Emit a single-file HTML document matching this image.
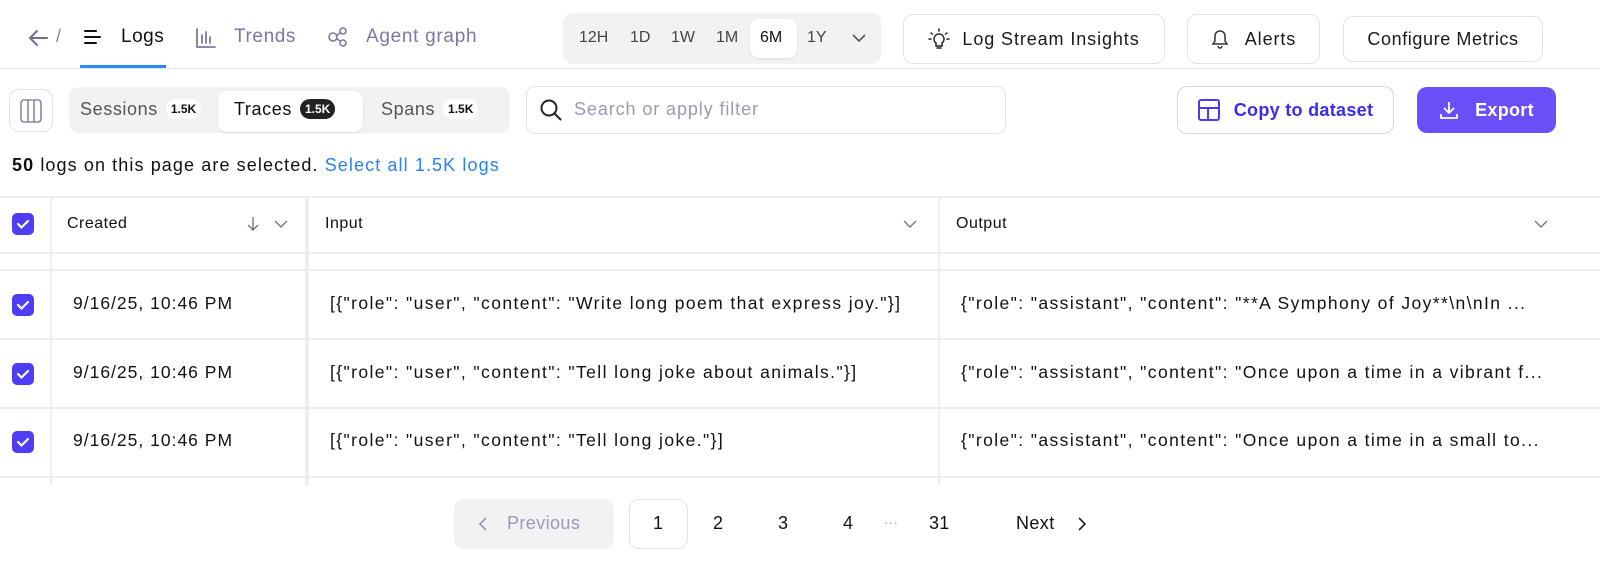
<!DOCTYPE html>
<html><head><style>
*{box-sizing:border-box;margin:0;padding:0}
body{width:1600px;height:570px;background:#fff;font-family:"Liberation Sans",sans-serif;color:#111;position:relative;overflow:hidden}
.a{position:absolute}
.t{font-size:18px;white-space:nowrap;letter-spacing:0.9px}
.btn{position:absolute;border:1px solid #e2e2ea;border-radius:10px;background:#fff;display:flex;align-items:center;justify-content:center;font-size:18px;color:#1a1a1a;letter-spacing:0.9px;white-space:nowrap}
.badge{display:inline-block;font-size:12px;font-weight:bold;background:#fff;border-radius:10px;padding:3px 5px;margin-left:8px;vertical-align:2px;color:#111;letter-spacing:0}
.hl{position:absolute;left:0;width:1600px;height:2px;background:#ececf1}
.vl{position:absolute;width:2px;background:#ececf1}
.cb{position:absolute;left:12px;width:22px;height:22px;border-radius:5px;background:#4f3df5}
.cb svg{position:absolute;left:4px;top:5px}
.cell{position:absolute;font-size:17.5px;color:#111;white-space:nowrap;letter-spacing:1.4px}
.h{position:absolute;font-size:16px;letter-spacing:0.5px}
</style></head><body>
<svg class="a" style="left:27px;top:29px" width="22" height="18" viewBox="0 0 22 18"><path d="M20 9H3M10 2L3 9l7 7" stroke="#6e6e8a" stroke-width="2" fill="none" stroke-linecap="round"/></svg>
<div class="a t" style="left:56px;top:26px;color:#888">/</div>
<svg class="a" style="left:84px;top:29px" width="18" height="16"><path d="M1 2h11M1 8h15M1 14h11" stroke="#111" stroke-width="2" stroke-linecap="round"/></svg>
<div class="a t" style="left:121px;top:26px;font-size:19px;letter-spacing:0.5px">Logs</div>
<div class="a" style="left:80px;top:65px;width:86px;height:3px;background:#2a8af6"></div>
<svg class="a" style="left:195px;top:27px" width="22" height="22"><path d="M2 2v18h18M7 8v8M11 5v11M15 10v6" stroke="#7b78a8" stroke-width="1.8" fill="none" stroke-linecap="round"/></svg>
<div class="a t" style="left:234px;top:26px;font-size:19px;color:#7b78a8;letter-spacing:0.6px">Trends</div>
<svg class="a" style="left:327px;top:26px" width="22" height="22"><circle cx="6" cy="11" r="4" stroke="#7b78a8" stroke-width="1.6" fill="none"/><circle cx="16" cy="5" r="3" stroke="#7b78a8" stroke-width="1.6" fill="none"/><circle cx="16" cy="17" r="3" stroke="#7b78a8" stroke-width="1.6" fill="none"/><path d="M10 9l3-2M10 13l3 2" stroke="#7b78a8" stroke-width="1.6"/></svg>
<div class="a t" style="left:366px;top:26px;font-size:19px;color:#7b78a8;letter-spacing:0.7px">Agent graph</div>
<div class="hl" style="top:68px;height:1px;background:#e4e4ea"></div>
<div class="a" style="left:563px;top:13px;width:318px;height:51px;background:#f2f2f5;border-radius:10px"></div>
<div class="a" style="left:750px;top:19px;width:47px;height:39px;background:#fff;border-radius:9px;box-shadow:0 1px 2px rgba(0,0,0,.1)"></div>
<div class="a" style="left:579px;top:29px;font-size:16px;color:#444">12H</div>
<div class="a" style="left:630px;top:29px;font-size:16px;color:#444">1D</div>
<div class="a" style="left:671px;top:29px;font-size:16px;color:#444">1W</div>
<div class="a" style="left:716px;top:29px;font-size:16px;color:#444">1M</div>
<div class="a" style="left:760px;top:29px;font-size:16px;color:#111">6M</div>
<div class="a" style="left:807px;top:29px;font-size:16px;color:#444">1Y</div>
<svg class="a" style="left:852px;top:33px" width="14" height="10"><path d="M1 2l6 6 6-6" stroke="#555" stroke-width="1.6" fill="none"/></svg>
<div class="btn" style="left:903px;top:14px;width:262px;height:50px"><svg width="22" height="22" style="margin-right:12px"><path d="M11 6a5 5 0 0 0-3 9v3h6v-3a5 5 0 0 0-3-9zM9 20h4M11 1v2M3 5l1.5 1M19 5l-1.5 1M1 11h2M19 11h2" stroke="#222" stroke-width="1.5" fill="none" stroke-linecap="round"/></svg>Log Stream Insights</div>
<div class="btn" style="left:1187px;top:14px;width:133px;height:50px"><svg width="18" height="20" style="margin-right:16px"><path d="M9 2a5 5 0 0 0-5 5v5l-2 3h14l-2-3V7a5 5 0 0 0-5-5zM7 17a2 2 0 0 0 4 0" stroke="#333" stroke-width="1.5" fill="none"/></svg>Alerts</div>
<div class="btn" style="left:1343px;top:16px;width:200px;height:46px;letter-spacing:0.6px">Configure Metrics</div>
<div class="btn" style="left:9px;top:89px;width:44px;height:43px"><svg width="22" height="24"><rect x="1" y="1" width="20" height="22" rx="3" stroke="#8886a8" stroke-width="1.6" fill="none"/><path d="M8 1v22M14 1v22" stroke="#8886a8" stroke-width="1.6"/></svg></div>
<div class="a" style="left:69px;top:87px;width:441px;height:46px;background:#f2f2f5;border-radius:10px"></div>
<div class="a" style="left:218px;top:91px;width:145px;height:41px;background:#fff;border-radius:9px;box-shadow:0 1px 2px rgba(0,0,0,.1)"></div>
<div class="a t" style="left:80px;top:99px;color:#555;letter-spacing:0.6px">Sessions<span class="badge">1.5K</span></div>
<div class="a t" style="left:234px;top:99px;color:#111;letter-spacing:0.6px">Traces<span class="badge" style="background:#222;color:#fff">1.5K</span></div>
<div class="a t" style="left:381px;top:99px;color:#555;letter-spacing:0.6px">Spans<span class="badge">1.5K</span></div>
<div class="a" style="left:526px;top:86px;width:480px;height:48px;border:1px solid #e2e2ea;border-radius:9px"></div>
<svg class="a" style="left:539px;top:98px" width="24" height="24"><circle cx="10" cy="10" r="7.5" stroke="#222" stroke-width="2" fill="none"/><path d="M15.5 15.5l6 6" stroke="#222" stroke-width="2" stroke-linecap="round"/></svg>
<div class="a t" style="left:574px;top:99px;color:#9b9ab0">Search or apply filter</div>
<div class="btn" style="left:1177px;top:86px;width:217px;height:48px;border-color:#d6d4e2;color:#3b2df0;font-weight:bold;letter-spacing:0.3px"><svg width="22" height="22" style="margin-right:14px"><rect x="1" y="1" width="20" height="20" rx="2" stroke="#4a3af5" stroke-width="2" fill="none"/><path d="M1 9h20M10 9v12" stroke="#4a3af5" stroke-width="2"/></svg>Copy to dataset</div>
<div class="btn" style="left:1417px;top:87px;width:139px;height:46px;background:#6a4ff8;border:none;color:#fff;font-weight:bold;letter-spacing:0.3px"><svg width="20" height="20" style="margin-right:16px"><path d="M10 2v11M5 8l5 5 5-5M2 14v4h16v-4" stroke="#fff" stroke-width="1.8" fill="none"/></svg>Export</div>
<div class="a t" style="left:12px;top:155px;letter-spacing:1.1px"><b>50</b> logs on this page are selected. <span style="color:#2a82f0">Select all 1.5K logs</span></div>
<div class="hl" style="top:196px"></div>
<div class="hl" style="top:252px"></div>
<div class="hl" style="top:269px"></div>
<div class="hl" style="top:338px"></div>
<div class="hl" style="top:407px"></div>
<div class="hl" style="top:476px"></div>
<div class="vl" style="left:50px;top:197px;height:288px"></div>
<div class="vl" style="left:305px;top:197px;height:288px;width:4px"></div>
<div class="vl" style="left:938px;top:197px;height:288px"></div>
<div class="cb" style="top:213px"><svg width="14" height="12"><path d="M2 6l3.5 3.5L12 3" stroke="#fff" stroke-width="2.2" fill="none" stroke-linecap="round"/></svg></div>
<div class="h" style="left:67px;top:215px">Created</div>
<svg class="a" style="left:246px;top:216px" width="14" height="16"><path d="M7 1v13M2 9l5 5 5-5" stroke="#777" stroke-width="1.4" fill="none"/></svg>
<svg class="a" style="left:274px;top:220px" width="14" height="9"><path d="M1 1l6 6 6-6" stroke="#777" stroke-width="1.4" fill="none"/></svg>
<div class="h" style="left:325px;top:215px">Input</div>
<svg class="a" style="left:903px;top:220px" width="14" height="9"><path d="M1 1l6 6 6-6" stroke="#777" stroke-width="1.4" fill="none"/></svg>
<div class="h" style="left:956px;top:215px">Output</div>
<svg class="a" style="left:1534px;top:220px" width="14" height="9"><path d="M1 1l6 6 6-6" stroke="#777" stroke-width="1.4" fill="none"/></svg>
<div class="cb" style="top:294px"><svg width="14" height="12"><path d="M2 6l3.5 3.5L12 3" stroke="#fff" stroke-width="2.2" fill="none" stroke-linecap="round"/></svg></div>
<div class="cell" style="left:73px;top:293px;letter-spacing:1px">9/16/25, 10:46 PM</div>
<div class="cell" style="left:330px;top:293px">[{"role": "user", "content": "Write long poem that express joy."}]</div>
<div class="cell" style="left:961px;top:293px">{"role": "assistant", "content": "**A Symphony of Joy**\n\nIn ...</div>
<div class="cb" style="top:363px"><svg width="14" height="12"><path d="M2 6l3.5 3.5L12 3" stroke="#fff" stroke-width="2.2" fill="none" stroke-linecap="round"/></svg></div>
<div class="cell" style="left:73px;top:362px;letter-spacing:1px">9/16/25, 10:46 PM</div>
<div class="cell" style="left:330px;top:362px">[{"role": "user", "content": "Tell long joke about animals."}]</div>
<div class="cell" style="left:961px;top:362px">{"role": "assistant", "content": "Once upon a time in a vibrant f...</div>
<div class="cb" style="top:431px"><svg width="14" height="12"><path d="M2 6l3.5 3.5L12 3" stroke="#fff" stroke-width="2.2" fill="none" stroke-linecap="round"/></svg></div>
<div class="cell" style="left:73px;top:430px;letter-spacing:1px">9/16/25, 10:46 PM</div>
<div class="cell" style="left:330px;top:430px">[{"role": "user", "content": "Tell long joke."}]</div>
<div class="cell" style="left:961px;top:430px">{"role": "assistant", "content": "Once upon a time in a small to...</div>
<div class="a" style="left:454px;top:499px;width:160px;height:50px;background:#f2f2f5;border-radius:10px"></div>
<svg class="a" style="left:478px;top:517px" width="10" height="14"><path d="M8 1L2 7l6 6" stroke="#9b98b8" stroke-width="1.6" fill="none"/></svg>
<div class="a t" style="left:507px;top:513px;color:#9b98b8;letter-spacing:0.4px">Previous</div>
<div class="a" style="left:629px;top:499px;width:59px;height:50px;border:1px solid #e2e2ea;border-radius:10px"></div>
<div class="a t" style="left:653px;top:513px">1</div>
<div class="a t" style="left:713px;top:513px">2</div>
<div class="a t" style="left:778px;top:513px">3</div>
<div class="a t" style="left:843px;top:513px">4</div>
<div class="a t" style="left:884px;top:514px;color:#999;font-size:14px;letter-spacing:0">···</div>
<div class="a t" style="left:929px;top:513px;letter-spacing:0.3px">31</div>
<div class="a t" style="left:1016px;top:513px;letter-spacing:0.4px">Next</div>
<svg class="a" style="left:1077px;top:517px" width="10" height="14"><path d="M2 1l6 6-6 6" stroke="#222" stroke-width="1.6" fill="none"/></svg>
</body></html>
